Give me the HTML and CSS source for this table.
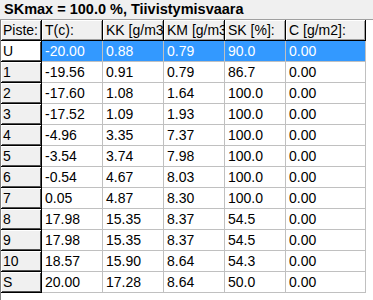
FILE: index.html
```html
<!DOCTYPE html>
<html>
<head>
<meta charset="utf-8">
<link rel="stylesheet" href="styles.css">
</head>
<body>
<div class="title">SKmax = 100.0 %, Tiivistymisvaara</div>
<div class="grid">
<table class="sheet">
<colgroup>
<col class="c0"><col class="cn"><col class="cn"><col class="cn"><col class="cn"><col class="cl">
</colgroup>
<thead>
<tr><th class="fix">Piste:</th><th>T(c):</th><th>KK [g/m3]</th><th>KM [g/m3]</th><th>SK [%]:</th><th>C [g/m2]:</th></tr>
</thead>
<tbody>
<tr class="sel"><td class="fix cur">U</td><td>-20.00</td><td>0.88</td><td>0.79</td><td>90.0</td><td>0.00</td></tr>
<tr><td class="fix">1</td><td>-19.56</td><td>0.91</td><td>0.79</td><td>86.7</td><td>0.00</td></tr>
<tr><td class="fix">2</td><td>-17.60</td><td>1.08</td><td>1.64</td><td>100.0</td><td>0.00</td></tr>
<tr><td class="fix">3</td><td>-17.52</td><td>1.09</td><td>1.93</td><td>100.0</td><td>0.00</td></tr>
<tr><td class="fix">4</td><td>-4.96</td><td>3.35</td><td>7.37</td><td>100.0</td><td>0.00</td></tr>
<tr><td class="fix">5</td><td>-3.54</td><td>3.74</td><td>7.98</td><td>100.0</td><td>0.00</td></tr>
<tr><td class="fix">6</td><td>-0.54</td><td>4.67</td><td>8.03</td><td>100.0</td><td>0.00</td></tr>
<tr><td class="fix">7</td><td>0.05</td><td>4.87</td><td>8.30</td><td>100.0</td><td>0.00</td></tr>
<tr><td class="fix">8</td><td>17.98</td><td>15.35</td><td>8.37</td><td>54.5</td><td>0.00</td></tr>
<tr><td class="fix">9</td><td>17.98</td><td>15.35</td><td>8.37</td><td>54.5</td><td>0.00</td></tr>
<tr><td class="fix">10</td><td>18.57</td><td>15.90</td><td>8.64</td><td>54.3</td><td>0.00</td></tr>
<tr><td class="fix">S</td><td>20.00</td><td>17.28</td><td>8.64</td><td>50.0</td><td>0.00</td></tr>
</tbody>
</table>
</div>
</body>
</html>
```

FILE: styles.css
```css
html, body {
  margin: 0;
  padding: 0;
  background: #ffffff;
  width: 373px;
  height: 300px;
  overflow: hidden;
  font-family: "Liberation Sans", Arial, sans-serif;
  color: #000;
}
.title {
  height: 20px;
  box-sizing: border-box;
  background: #f0f0f0;
  border-bottom: 1px solid #a0a0a0;
  font-weight: bold;
  font-size: 14.5px;
  line-height: 19px;
  padding-left: 4px;
  white-space: nowrap;
}
.grid {
  height: 280px;
  border-left: 1px solid #808080;
  background: #ffffff;
}
.sheet {
  border-collapse: separate;
  border-spacing: 0;
  table-layout: fixed;
  width: 365px;
  font-size: 14px;
}
.c0 { width: 41px; }
.cn { width: 61px; }
.cl { width: 80px; }
.sheet th, .sheet td {
  box-sizing: border-box;
  height: 21px;
  padding: 0 0 0 3px;
  text-align: left;
  font-weight: normal;
  white-space: nowrap;
  overflow: hidden;
  border-right: 1px solid #c0c0c0;
  border-bottom: 1px solid #c0c0c0;
  vertical-align: middle;
  line-height: 18px;
}
.sheet th {
  background: #f0f0f0;
  border-right: 1px solid #000;
  border-bottom: 1px solid #000;
  box-shadow: inset 1px 1px 0 #ffffff, inset -1px -1px 0 #a0a0a0;
}
.sheet td.fix {
  background: #f0f0f0;
  border-right: 1px solid #000;
  border-bottom: 1px solid #000;
  box-shadow: inset 1px 1px 0 #ffffff, inset -1px -1px 0 #505050;
  padding-left: 2px;
}
.sheet th.fix {
  padding-left: 2px;
  box-shadow: inset 1px 1px 0 #ffffff, inset -1px -1px 0 #505050;
}
.sheet td.cur {
  background: #ffffff;
}
.sel td {
  background: #3399ff;
  color: #ffffff;
}
.sel td.fix { color: #000; }
```
